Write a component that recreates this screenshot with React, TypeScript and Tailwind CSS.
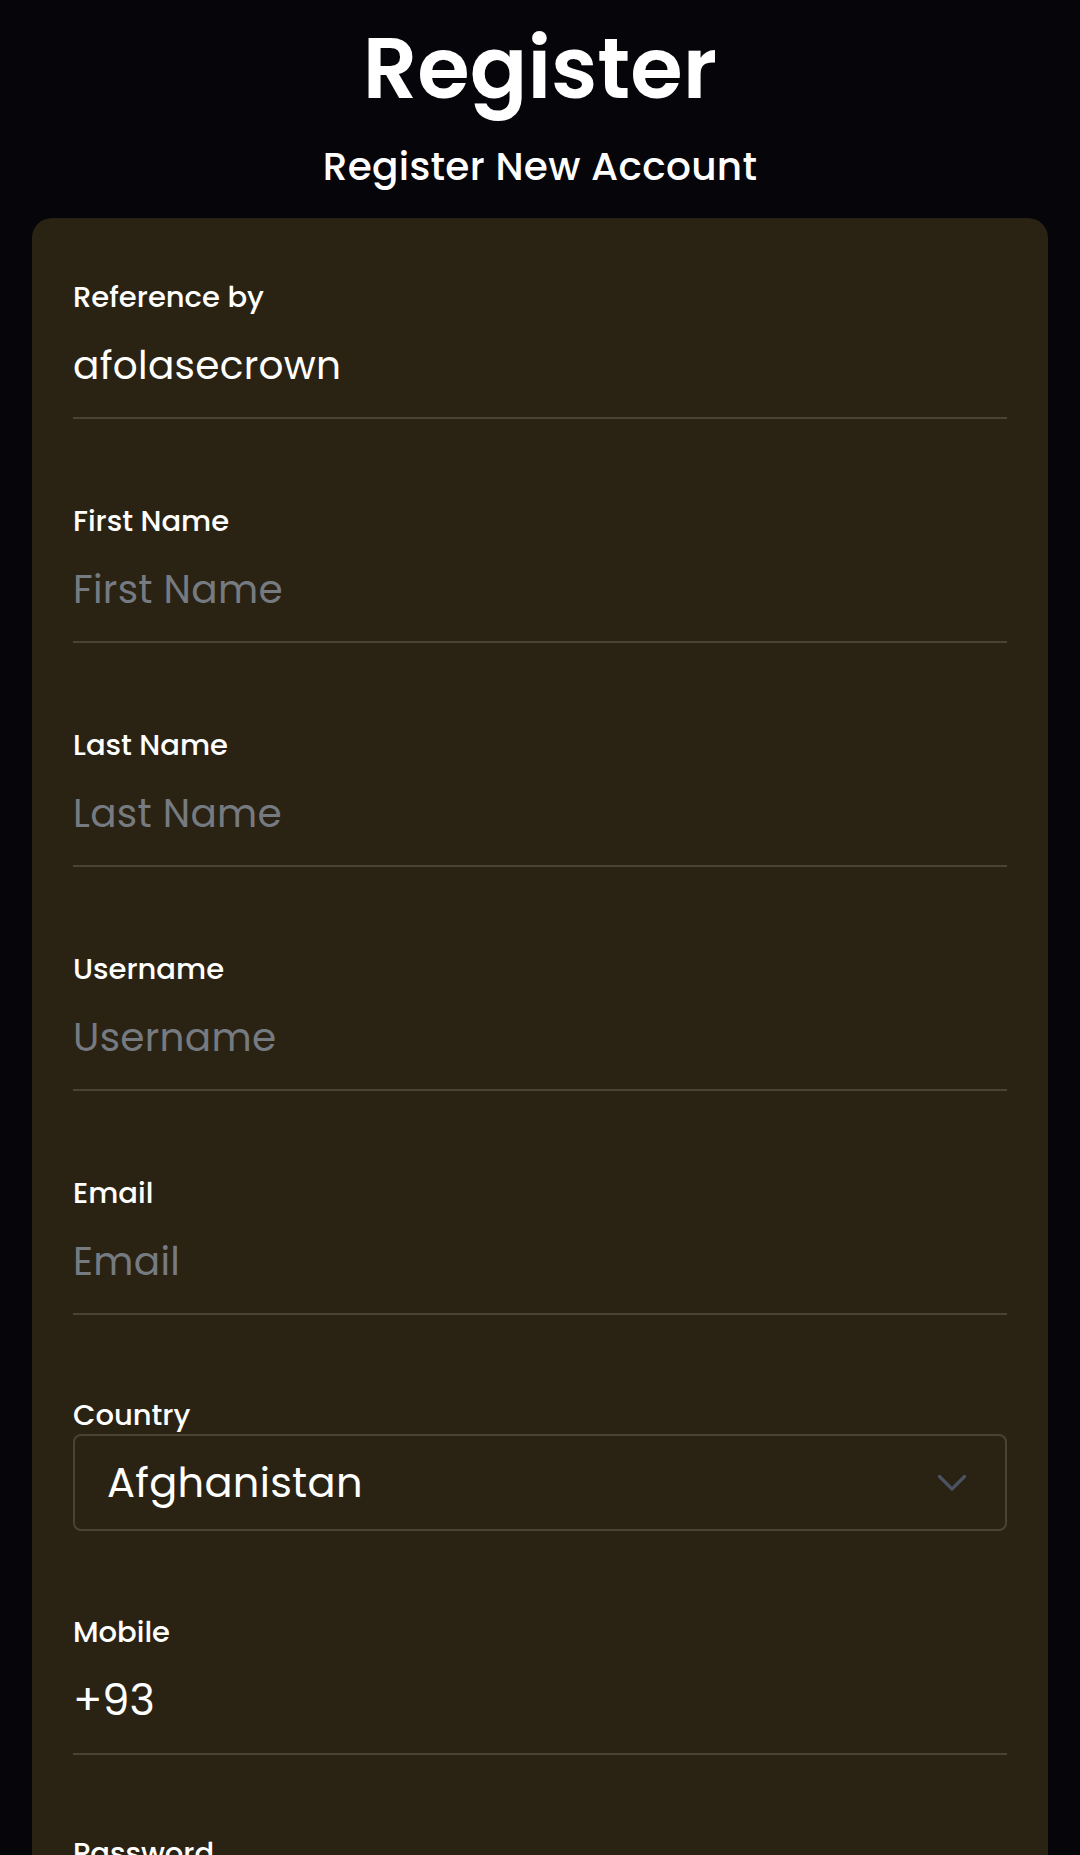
import React from "react";

const font = { fontFamily: 'Poppins, Inter, "Noto Sans", sans-serif' };

function Label({ children }: { children: React.ReactNode }) {
  return (
    <label className="block h-[32px] text-[29px] leading-[32px] font-medium text-white">
      {children}
    </label>
  );
}

function Field({
  label,
  value,
  placeholder,
  gap = "mt-[86px]",
}: {
  label: string;
  value?: string;
  placeholder?: string;
  gap?: string;
}) {
  return (
    <div className={gap}>
      <Label>{label}</Label>
      <div className="mt-[29px] pb-[27px] border-b-2 border-[#4a4232]">
        <input
          className="block w-full h-[48px] bg-transparent text-[39px] leading-[48px] text-white placeholder:text-[#767a81] outline-none tracking-[0.3px]"
          defaultValue={value}
          placeholder={placeholder}
          style={font}
        />
      </div>
    </div>
  );
}

export default function App() {
  return (
    <div className="min-h-[1855px] bg-[#05050a] overflow-hidden" style={font}>
      <div className="pt-[26px] flex flex-col items-center">
        <h1 className="text-[85px] leading-[85px] font-semibold text-white">Register</h1>
        <p className="mt-[34px] text-[39px] leading-[44px] font-medium text-white tracking-[0.3px]">
          Register New Account
        </p>
      </div>
      <div className="mt-[29px] mx-[32px] rounded-[20px] bg-[#2a2313] px-[41px] pt-[63px] pb-[60px]">
        <Field label="Reference by" value="afolasecrown" gap="" />
        <Field label="First Name" placeholder="First Name" />
        <Field label="Last Name" placeholder="Last Name" />
        <Field label="Username" placeholder="Username" />
        <Field label="Email" placeholder="Email" />

        <div className="mt-[84px]">
          <Label>Country</Label>
          <div className="mt-[3px] h-[97px] rounded-[8px] border-2 border-[#4a4232] flex items-center pl-[32px] pr-[38px]">
            <span className="flex-1 text-[41.5px] leading-[48px] text-white tracking-[0.3px]">Afghanistan</span>
            <svg width="30" height="18" viewBox="0 0 30 18" fill="none">
              <path d="M2.5 2.5 L15 15 L27.5 2.5" stroke="#4b5262" strokeWidth="3.2" strokeLinecap="round" strokeLinejoin="round" />
            </svg>
          </div>
        </div>

        <div className="mt-[85px]">
          <Label>Mobile</Label>
          <div className="mt-[28px] pb-[29px] border-b-2 border-[#4a4232]">
            <input
              className="block w-full h-[48px] bg-transparent text-[43px] leading-[48px] text-white outline-none"
              defaultValue="+93"
              style={font}
            />
          </div>
        </div>

        <div className="mt-[82px]">
          <Label>Password</Label>
          <div className="mt-[29px] pb-[27px] border-b-2 border-[#4a4232]">
            <input
              type="password"
              className="block w-full h-[48px] bg-transparent text-[39px] leading-[48px] text-white placeholder:text-[#767a81] outline-none"
              placeholder="Password"
              style={font}
            />
          </div>
        </div>
      </div>
    </div>
  );
}
